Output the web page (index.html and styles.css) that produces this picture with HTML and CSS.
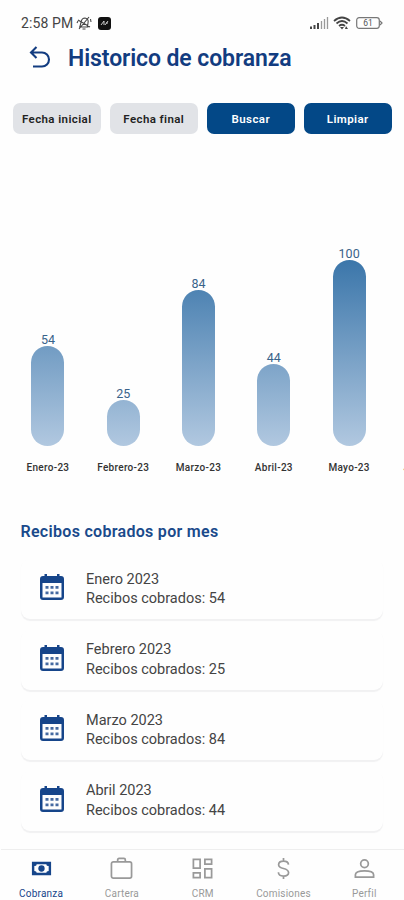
FILE: index.html
```
<!DOCTYPE html>
<html lang="es">
<head>
<meta charset="utf-8">
<title>Historico de cobranza</title>
<link rel="stylesheet" href="styles.css">
</head>
<body>
<svg class="defs" aria-hidden="true">
  <symbol id="calendar" viewBox="0 0 24 28">
    <path fill="currentColor" fill-rule="evenodd" d="M4.500 1h2.500v2h10V1h2.500v2H21q3 0 3 3v18q0 3-3 3H3q-3 0-3-3V6q0-3 3-3h1.500zM2.500 10v14.500h19V10z"/>
    <path fill="currentColor" opacity=".8" d="M5.500 13h3v2.800h-3zM10.500 13h3v2.800h-3zM15.500 13h3v2.800h-3zM5.500 18.500h3v2.800h-3zM10.500 18.500h3v2.800h-3zM15.500 18.500h3v2.800h-3z"/>
  </symbol>
</svg>
<div class="screen">
  <div class="status">
    <span class="time">2:58 PM</span>
    <svg class="bell" viewBox="0 0 16 16"><path d="M3 12h9.500M4 11.500l1.200-5Q6 3 9 3q4 1 3 5l-.5 3.500M6.500 14h3M2 5l12 7M3 14L13 2M1 8l1-2M14.500 4l.5 3"/></svg>
    <svg class="app" viewBox="0 0 13 13"><rect width="13" height="13" rx="3"/><path d="M3 8l3-4v4M7 8l3-4M8 6h2"/></svg>
    <svg class="signal" viewBox="0 0 19 12"><path class="on" d="M1 9.500V12M4.500 8v4M8 6v6"/><path class="off" d="M11.500 4v8M14.500 2v10M17.500 0v12"/></svg>
    <svg class="wifi" viewBox="0 0 18 14"><path d="M1 5q8-7 16 0M3.500 7.500q5.500-5 11 0M6 10q3-2.500 6 0"/><path class="dot" d="M7 11h4l-2 2.500zM13 10l2 3h-3z"/></svg>
    <svg class="battery" viewBox="0 0 27 12"><rect x=".7" y=".7" width="22.600" height="10.600" rx="2.500"/><path d="M24 4l2 2-2 2"/><text x="12" y="9">61</text></svg>
  </div>
  <header class="header">
    <svg class="back" viewBox="0 0 22 24"><path d="M7.500 2L2 7.500 7.500 13M2.500 7.500H13a7 7 0 0 1 0 14H4"/></svg>
    <h1>Historico de cobranza</h1>
  </header>
  <div class="filters">
    <button class="btn">Fecha inicial</button>
    <button class="btn">Fecha final</button>
    <button class="btn primary">Buscar</button>
    <button class="btn primary">Limpiar</button>
  </div>
  <div class="chart">
    <div class="col"><span class="val">54</span><i class="bar" style="height:100px"></i><span class="month">Enero-23</span></div>
    <div class="col"><span class="val">25</span><i class="bar" style="height:46px"></i><span class="month">Febrero-23</span></div>
    <div class="col"><span class="val">84</span><i class="bar" style="height:156px"></i><span class="month">Marzo-23</span></div>
    <div class="col"><span class="val">44</span><i class="bar" style="height:82px"></i><span class="month">Abril-23</span></div>
    <div class="col"><span class="val">100</span><i class="bar" style="height:186px"></i><span class="month">Mayo-23</span></div>
    <div class="col"><span class="month">Junio-23</span></div>
  </div>
  <h2>Recibos cobrados por mes</h2>
  <div class="list">
    <div class="card"><svg class="cal"><use href="#calendar"/></svg><div><p>Enero 2023</p><p>Recibos cobrados: 54</p></div></div>
    <div class="card"><svg class="cal"><use href="#calendar"/></svg><div><p>Febrero 2023</p><p>Recibos cobrados: 25</p></div></div>
    <div class="card"><svg class="cal"><use href="#calendar"/></svg><div><p>Marzo 2023</p><p>Recibos cobrados: 84</p></div></div>
    <div class="card"><svg class="cal"><use href="#calendar"/></svg><div><p>Abril 2023</p><p>Recibos cobrados: 44</p></div></div>
  </div>
  <nav class="nav">
    <a class="tab active"><svg viewBox="0 0 24 24"><path class="fill" fill-rule="evenodd" d="M2 5h20v14H2zM7 7.500q0 2-2.500 2v5q2.500 0 2.500 2h10q0-2 2.500-2v-5q-2.500 0-2.500-2z"/><circle class="fill" cx="12" cy="12" r="3.300"/></svg><span>Cobranza</span></a>
    <a class="tab"><svg viewBox="0 0 24 24"><rect x="1.500" y="5" width="21" height="17" rx="2"/><path d="M8 5V3q0-1.500 1.500-1.500h5Q16 1.500 16 3v2"/></svg><span>Cartera</span></a>
    <a class="tab"><svg viewBox="0 0 24 24"><path d="M2.500 2.500h7v9h-7zM14.500 2.500h7v5h-7zM2.500 16.500h7v5h-7zM14.500 12.500h7v9h-7z"/></svg><span>CRM</span></a>
    <a class="tab"><svg viewBox="0 0 24 24"><path d="M12 1v3M12 20v3M17.200 8Q17 4.200 12 4.200T6.900 8Q6.900 10.700 12 12t5.300 4.200q0 3.700-5.300 3.700T6.700 16"/></svg><span>Comisiones</span></a>
    <a class="tab"><svg viewBox="0 0 24 24"><circle cx="12" cy="7" r="4"/><path d="M2.500 21v-2.500q0-4 9.500-4t9.500 4V21z"/></svg><span>Perfil</span></a>
  </nav>
</div>
</body>
</html>
```
FILE: styles.css
```
* { box-sizing: border-box; }
body { margin: 0; background: #fefefe; font-family: Roboto, "Liberation Sans", sans-serif; }
h1, h2, p { margin: 0; white-space: nowrap; }
svg { display: block; flex: none; fill: none; stroke: currentColor; }
.defs { width: 0; height: 0; float: left; }
.screen { display: flex; flex-direction: column; width: 404px; height: 900px; overflow: hidden; }

.status { display: flex; align-items: center; height: 20px; margin-top: 13px; padding: 0 21px; color: #444; }
.time { font-size: 14px; letter-spacing: .1px; width: 55px; white-space: nowrap; }
.bell { width: 16px; height: 16px; stroke-width: 1.1; }
.app { width: 13px; height: 13px; margin-left: 6px; }
.app rect { fill: #111; stroke: none; }
.app path { stroke: #ddd; stroke-width: .9; }
.signal { width: 19px; height: 12px; margin-left: auto; }
.on { stroke-width: 2; }
.off { stroke: #999; stroke-width: 1.3; }
.wifi { width: 18px; height: 14px; margin-left: 4px; stroke-width: 1.7; }
.dot { fill: #444; stroke: none; }
.battery { width: 27px; height: 12px; margin-left: 5px; stroke: #777; stroke-width: 1.2; }
.battery text { font-size: 8.5px; fill: #555; stroke: none; text-anchor: middle; }

.header { display: flex; align-items: center; height: 30px; margin-top: 10px; padding-left: 29px; color: #123c80; }
.back { width: 22px; height: 24px; margin-top: -3px; stroke-width: 2.1; }
h1 { margin-left: 17px; padding-top: 1px; font-size: 23px; font-weight: 600; line-height: 30px; letter-spacing: -.1px; }

.filters { display: grid; grid-template-columns: repeat(4, 87.500px); gap: 9.500px; margin: 30px 0 0 13px; }
.btn { height: 31px; padding: 1px 0 0; border: 0; border-radius: 7px; background: #e1e3e7; color: #222; font: 600 11.500px/30px Roboto, sans-serif; letter-spacing: .4px; white-space: nowrap; }
.primary { background: #034887; color: #fff; }

.chart { display: grid; grid-template-columns: repeat(6, 75.300px); height: 241px; margin: 99px 0 0 10.300px; }
.col { display: flex; flex-direction: column; align-items: center; justify-content: flex-end; }
.val { font-size: 12.500px; line-height: 13px; color: #39638a; }
.bar { width: 33px; flex: none; border-radius: 16.500px; background: linear-gradient(#3b76aa, #b1c8e0) bottom / 100% 186px no-repeat; }
.month { margin-top: 15px; font-size: 10px; font-weight: 500; line-height: 13px; letter-spacing: .3px; color: #333; white-space: nowrap; }

h2 { margin: 48px 0 0 20.500px; font-size: 16px; font-weight: 600; line-height: 20px; letter-spacing: .3px; color: #1a4a8b; }
.list { display: grid; grid-template-rows: repeat(4, 60px); gap: 10.600px; margin: 17px 21px 0; }
.card { display: flex; align-items: center; padding: 0 0 0 19px; border-radius: 9px; background: #fefefe; box-shadow: 0 1.500px 1px #f1f1f2; }
.cal { width: 24px; height: 28px; margin-top: -4px; color: #16458a; stroke: none; }
.card div { margin-left: 22px; }
.card p { font-size: 14.500px; line-height: 19.500px; color: #444; }

.nav { display: grid; grid-template-columns: repeat(5, 80.800px); margin: auto 0 0 .7px; height: 50px; box-shadow: 0 -1px #eee; }
.tab { display: flex; flex-direction: column; align-items: center; padding-top: 7px; color: #999; font-size: 10px; line-height: 12px; letter-spacing: .2px; }
.tab svg { width: 23px; height: 23px; stroke-width: 1.8; }
.tab span { margin-top: 8px; }
.active { color: #16458a; }
.fill { fill: currentColor; stroke: none; }
```
